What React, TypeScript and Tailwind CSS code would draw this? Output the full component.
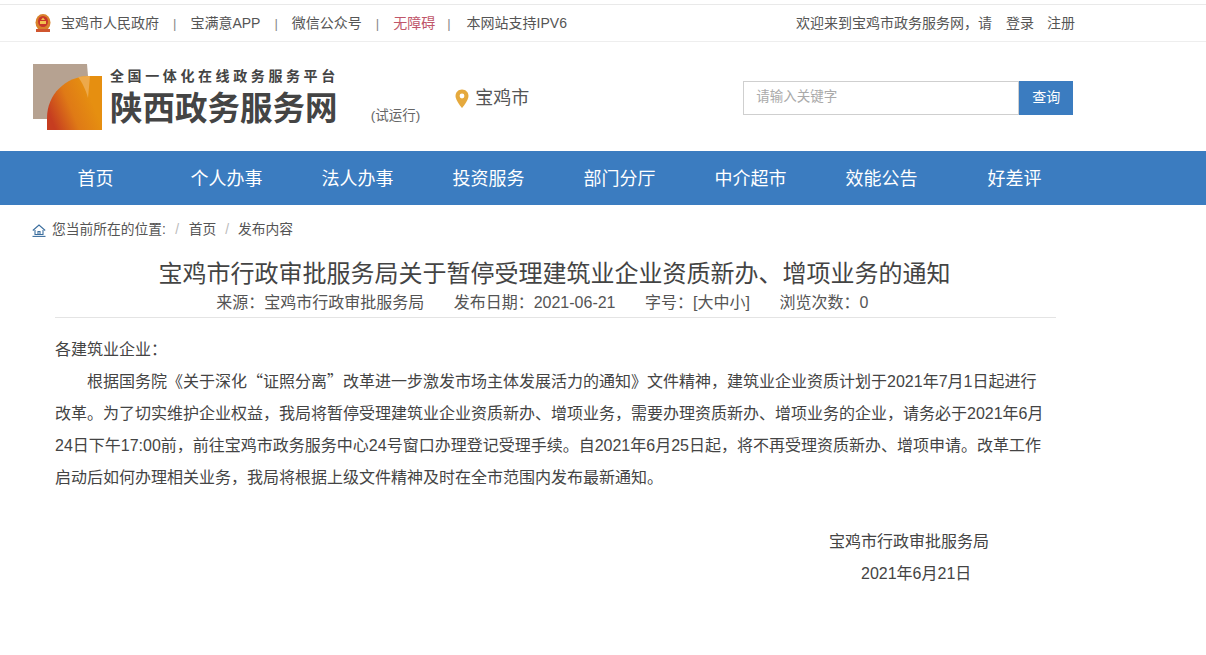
import React from 'react';

const FONT = 'font-["Liberation_Sans","Noto_Sans_CJK_SC",sans-serif]';

const NAV_ITEMS = ['首页', '个人办事', '法人办事', '投资服务', '部门分厅', '中介超市', '效能公告'];

// 国徽小图标
const Emblem = () => (
  <svg width="18" height="20" viewBox="0 0 18 20" className="shrink-0">
    <ellipse cx="9" cy="9.5" rx="7.5" ry="8.5" fill="#d9822b" />
    <ellipse cx="9" cy="8.5" rx="5" ry="5.5" fill="#c8372a" />
    <rect x="6" y="8" width="6" height="3" fill="#f2c14e" />
    <path d="M7 7 L9 4.5 L11 7 Z" fill="#f2c14e" />
    <path d="M2 16 H16 V19 H2 Z" fill="#d0562f" />
  </svg>
);

const Logo = () => (
  <svg width="72" height="70" viewBox="0 0 72 70" className="shrink-0">
    <defs>
      <linearGradient id="logoGrad" x1="0" y1="0.6" x2="0.75" y2="0.3">
        <stop offset="0" stopColor="#c63d20" />
        <stop offset="0.5" stopColor="#df7a16" />
        <stop offset="1" stopColor="#e68f10" />
      </linearGradient>
    </defs>
    <path d="M1 2 H55 L56 14 V57 H1 Z" fill="#b6a291" />
    <path d="M15 68 V56 C15 33 33 14 58 14 H70 V68 Z" fill="url(#logoGrad)" />
    <path d="M46 15 C52 14 55 14 58 14 L56 36 C54 28 50 20 46 15 Z" fill="#eda94a" />
  </svg>
);

const Pin = () => (
  <svg width="14" height="20" viewBox="0 0 14 20">
    <path d="M7 0.5 C3.2 0.5 0.5 3.4 0.5 7 C0.5 11.5 7 19 7 19 C7 19 13.5 11.5 13.5 7 C13.5 3.4 10.8 0.5 7 0.5 Z" fill="#e5a93d" />
    <circle cx="7" cy="7" r="2.4" fill="#fff" />
  </svg>
);

const HomeIcon = () => (
  <svg width="14" height="13" viewBox="0 0 14 13" fill="none" stroke="#3b6e9e" strokeWidth="1.1">
    <path d="M0.8 6.5 L7 1 L13.2 6.5" />
    <path d="M3 6 V10.5 H11 V6" />
    <path d="M6 10.5 V7.5 H8 V10.5" />
    <path d="M0.5 12.4 H13.5" />
  </svg>
);

const Sep = () => <span className="text-[#888] text-[13px]">|</span>;

export default function App() {
  return (
    <div className={`${FONT} bg-white min-h-[655px] text-[#444] overflow-hidden`}>
      {/* 顶部栏 */}
      <div className="h-[5px] border-b border-[#e9e9e9]" />
      <div className="h-[37px] border-b border-[#eeeeee] flex items-center justify-between pl-[34px] pr-[131px] text-[14px] text-[#555]">
        <div className="flex items-center">
          <Emblem />
          <span className="ml-[9px]">宝鸡市人民政府</span>
          <span className="ml-[14px] mr-[14px]"><Sep /></span>
          <span>宝满意APP</span>
          <span className="ml-[14px] mr-[14px]"><Sep /></span>
          <span>微信公众号</span>
          <span className="ml-[14px] mr-[14px]"><Sep /></span>
          <span className="text-[#c0566a]">无障碍</span>
          <span className="ml-[12px] mr-[16px]"><Sep /></span>
          <span>本网站支持IPV6</span>
        </div>
        <div className="flex items-center gap-[13px]">
          <span className="mr-[1px]">欢迎来到宝鸡市政务服务网，请</span>
          <span>登录</span>
          <span>注册</span>
        </div>
      </div>

      {/* 页头 */}
      <div className="h-[109px] flex items-center pl-[32px]">
        <Logo />
        <div className="ml-[6px] mt-[4px] flex flex-col font-bold text-[#444]">
          <span className="text-[14px] leading-[20px] tracking-[3.6px] whitespace-nowrap">全国一体化在线政务服务平台</span>
          <span className="text-[32.5px] leading-[46px] whitespace-nowrap">陕西政务服务网</span>
        </div>
        <span className="ml-[32px] mt-[40px] text-[13.5px] text-[#666] whitespace-nowrap">(试运行)</span>
        <div className="ml-[35px] mt-[4px] flex items-center gap-[6px] text-[18px] text-[#555]">
          <Pin />
          <span>宝鸡市</span>
        </div>
        <div className="ml-[214px] mt-[2px] flex h-[34px]">
          <div className="w-[276px] border border-[#cfcfcf] flex items-center pl-[12px] text-[13.5px] text-[#aaa]">请输入关键字</div>
          <div className="w-[54px] bg-[#3b7cc0] text-white text-[14px] flex items-center justify-center">查询</div>
        </div>
      </div>

      {/* 导航 */}
      <div className="h-[54px] pt-[2px] bg-[#3b7cc0] flex items-center pl-[30px] text-white text-[18px]">
        {NAV_ITEMS.map((item) => (
          <div key={item} className="w-[131px] text-center">{item}</div>
        ))}
        <div className="w-[131px] pl-[4px] text-center">好差评</div>
      </div>

      {/* 面包屑 */}
      <div className="h-[50px] pt-[1px] flex items-center pl-[32px] text-[13.75px] text-[#555]">
        <HomeIcon />
        <span className="ml-[6px]">您当前所在的位置:</span>
        <span className="mx-[9.5px] text-[#bbb]">/</span>
        <span>首页</span>
        <span className="mx-[9px] text-[#bbb]">/</span>
        <span>发布内容</span>
      </div>

      {/* 正文 */}
      <div className="ml-[55px] w-[1001px]">
        <h1 className="text-[24px] leading-[38px] text-center pr-[2px] text-[#444] whitespace-nowrap">
          宝鸡市行政审批服务局关于暂停受理建筑业企业资质新办、增项业务的通知
        </h1>
        <div className="h-[23px] border-b border-[#e4e4e4] box-content pb-[1px] flex justify-center gap-[29.5px] pr-[26.5px] text-[16px] leading-[20px] text-[#555] whitespace-nowrap">
          <span>来源：宝鸡市行政审批服务局</span>
          <span>发布日期：2021-06-21</span>
          <span>字号：[大中小]</span>
          <span>浏览次数：0</span>
        </div>
        <div className="pt-[16px] text-[16px] leading-[32px] text-[#444] whitespace-nowrap">
          <p>各建筑业企业：</p>
          <p className="indent-[32px]">根据国务院《关于深化<span className='font-["Noto_Sans_CJK_SC",sans-serif] leading-none'>“</span>证照分离<span className='font-["Noto_Sans_CJK_SC",sans-serif] leading-none'>”</span>改革进一步激发市场主体发展活力的通知》文件精神，建筑业企业资质计划于2021年7月1日起进行</p>
          <p>改革。为了切实维护企业权益，我局将暂停受理建筑业企业资质新办、增项业务，需要办理资质新办、增项业务的企业，请务必于2021年6月</p>
          <p>24日下午17:00前，前往宝鸡市政务服务中心24号窗口办理登记受理手续。自2021年6月25日起，将不再受理资质新办、增项申请。改革工作</p>
          <p>启动后如何办理相关业务，我局将根据上级文件精神及时在全市范围内发布最新通知。</p>
          <div className="mt-[32px] pl-[774px]">
            <p>宝鸡市行政审批服务局</p>
            <p className="pl-[32px]">2021年6月21日</p>
          </div>
        </div>
      </div>
    </div>
  );
}
